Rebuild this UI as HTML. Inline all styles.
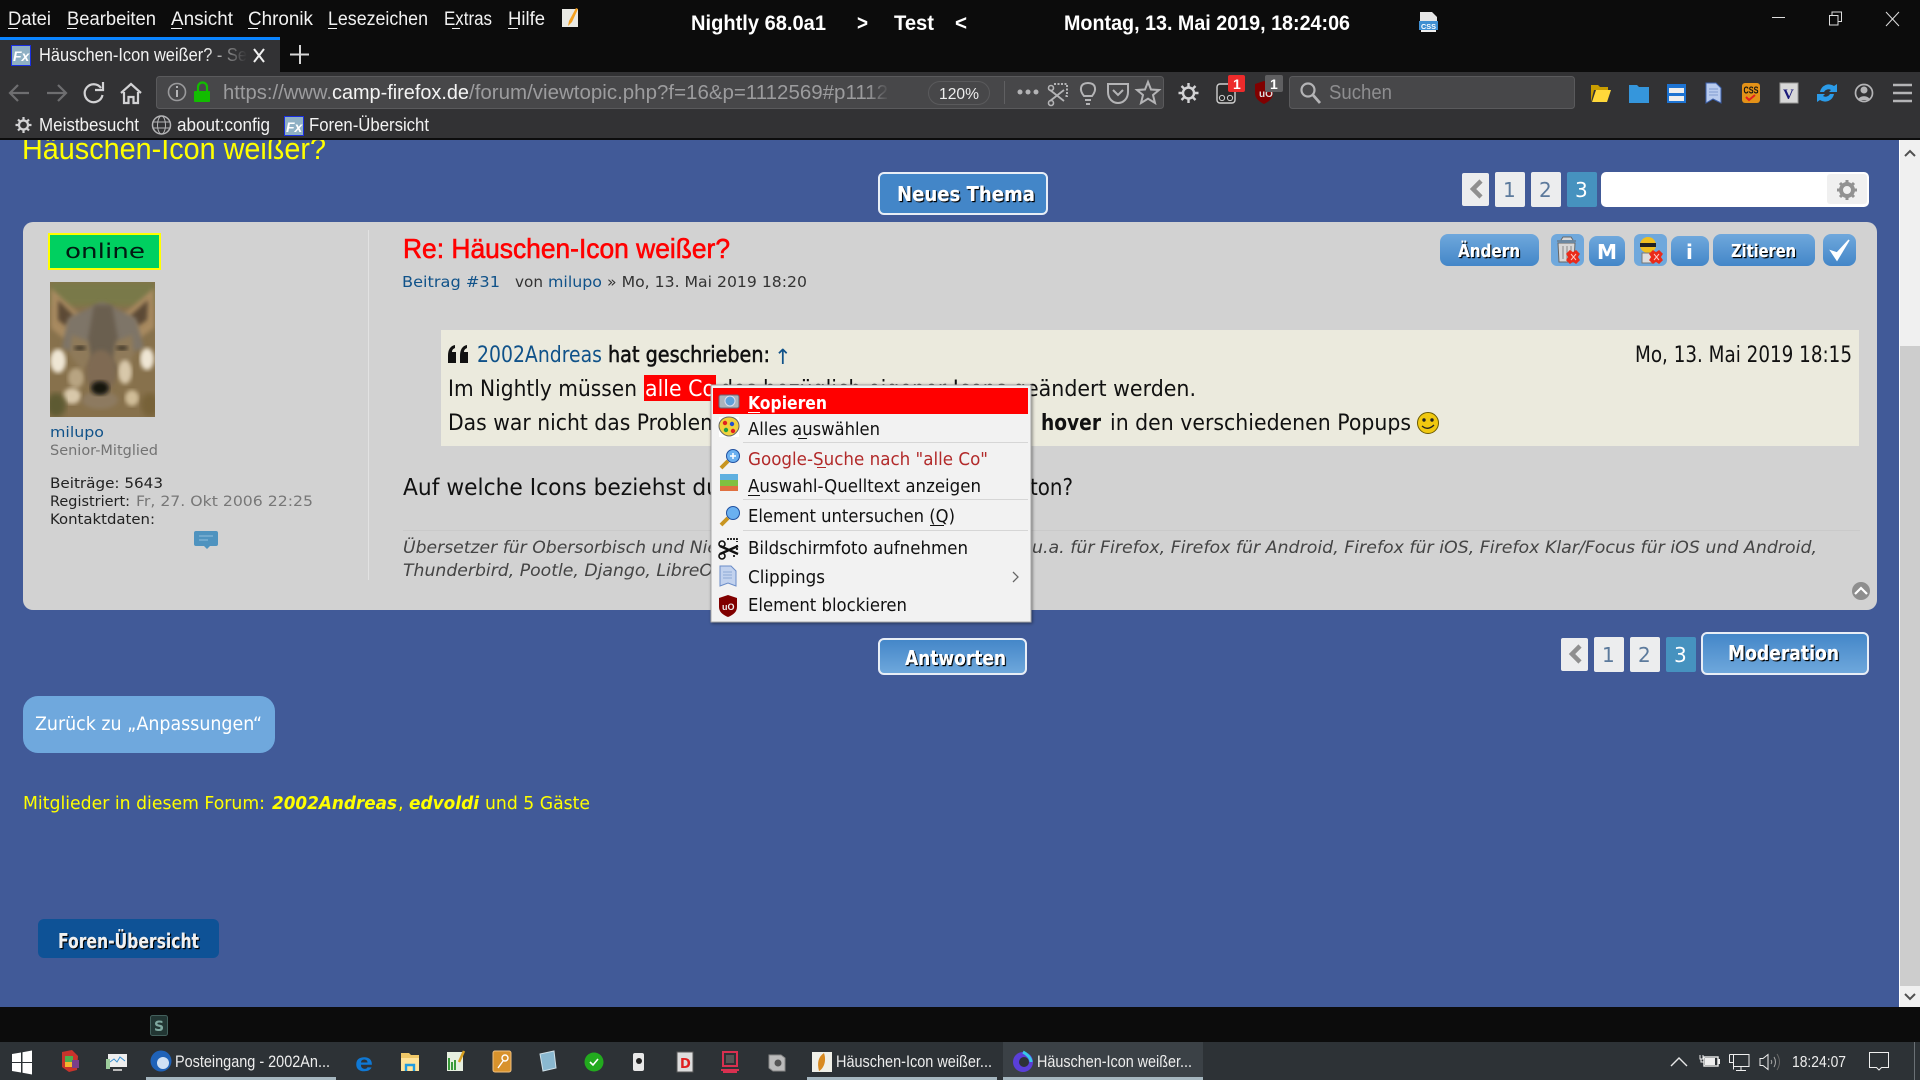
<!DOCTYPE html>
<html lang="de"><head><meta charset="utf-8"><title>Häuschen-Icon weißer?</title>
<style>
html,body{margin:0;padding:0;width:1920px;height:1080px;overflow:hidden;background:#415a98}
svg{display:block;position:absolute;left:0;top:0}
text{white-space:pre}
.u{font-family:"Liberation Sans",sans-serif}
.d{font-family:"DejaVu Sans",sans-serif}
.db{font-family:"DejaVu Sans",sans-serif;font-weight:bold}
.bt{font-family:"DejaVu Sans",sans-serif;font-weight:bold;fill:#fff;filter:url(#ts)}
.ic{fill:none;stroke:#b4b4b6;stroke-width:2}
</style></head><body>
<svg width="1920" height="1080" viewBox="0 0 1920 1080" xmlns="http://www.w3.org/2000/svg">
<defs>
<linearGradient id="g1" x1="0" y1="0" x2="0" y2="1"><stop offset="0" stop-color="#6fa8dc"/><stop offset="1" stop-color="#4386c8"/></linearGradient>
<linearGradient id="g2" x1="0" y1="0" x2="0" y2="1"><stop offset="0" stop-color="#4386c8"/><stop offset="1" stop-color="#6fa8dc"/></linearGradient>
<linearGradient id="fade" x1="0" y1="0" x2="1" y2="0"><stop offset="0" stop-color="#323234" stop-opacity="0"/><stop offset="1" stop-color="#323234"/></linearGradient>
<linearGradient id="fade2" x1="0" y1="0" x2="1" y2="0"><stop offset="0" stop-color="#474749" stop-opacity="0"/><stop offset="1" stop-color="#474749"/></linearGradient>
<filter id="ts" x="-5%" y="-20%" width="110%" height="150%"><feDropShadow dx="1.200" dy="1.200" stdDeviation="0.2" flood-color="#000" flood-opacity="1"/></filter>
<filter id="blur2"><feGaussianBlur stdDeviation="2.200"/></filter>
<filter id="blur3"><feGaussianBlur stdDeviation="3"/></filter>
<filter id="sh" x="-5%" y="-5%" width="110%" height="110%"><feDropShadow dx="1" dy="1" stdDeviation="1.500" flood-color="#000" flood-opacity=".45"/></filter>
<clipPath id="av"><rect x="50" y="282" width="105" height="135"/></clipPath>
</defs>

<!-- page -->
<rect width="1920" height="1080" fill="#415a98"/>
<text class="u" x="22" y="159" font-size="31" fill="#ffff00" textLength="304" lengthAdjust="spacingAndGlyphs">Häuschen-Icon weißer?</text>

<!-- title bar -->
<rect x="0" y="0" width="1920" height="72" fill="#0c0c0c"/>
<g class="u" font-size="19" fill="#f2f2f2">
<text x="8" y="25" textLength="43" lengthAdjust="spacingAndGlyphs">Datei</text>
<text x="67" y="25" textLength="89" lengthAdjust="spacingAndGlyphs">Bearbeiten</text>
<text x="171" y="25" textLength="62" lengthAdjust="spacingAndGlyphs">Ansicht</text>
<text x="248" y="25" textLength="65" lengthAdjust="spacingAndGlyphs">Chronik</text>
<text x="328" y="25" textLength="100" lengthAdjust="spacingAndGlyphs">Lesezeichen</text>
<text x="444" y="25" textLength="48" lengthAdjust="spacingAndGlyphs">Extras</text>
<text x="508" y="25" textLength="37" lengthAdjust="spacingAndGlyphs">Hilfe</text>
</g>
<g fill="#f2f2f2"><rect x="8" y="28" width="10" height="1"/><rect x="67" y="28" width="10" height="1"/><rect x="171" y="28" width="11" height="1"/><rect x="248" y="28" width="10" height="1"/><rect x="328" y="28" width="9" height="1"/><rect x="452" y="28" width="8" height="1"/><rect x="508" y="28" width="10" height="1"/></g>
<rect x="562" y="9" width="16" height="18" fill="#e9e9e4"/><path d="M568 26l1-5 7-13 2 1-6 13z" fill="#f4a020"/>
<g class="u" font-size="21" font-weight="bold" fill="#fff">
<text x="691" y="30" textLength="135" lengthAdjust="spacingAndGlyphs">Nightly 68.0a1</text>
<text x="857" y="30" textLength="11" lengthAdjust="spacingAndGlyphs">&gt;</text>
<text x="894" y="30" textLength="40" lengthAdjust="spacingAndGlyphs">Test</text>
<text x="955" y="30" textLength="12" lengthAdjust="spacingAndGlyphs">&lt;</text>
<text x="1064" y="30" textLength="286" lengthAdjust="spacingAndGlyphs">Montag, 13. Mai 2019, 18:24:06</text>
</g>
<path d="M1420 12h12l5 5v8h-17z" fill="#e6e6e6"/><rect x="1419" y="21" width="19" height="9" fill="#3f8fd2"/><rect x="1421" y="30" width="15" height="2" fill="#eee"/>
<text class="u" x="1421" y="29" font-size="7" font-weight="bold" fill="#fff" textLength="15" lengthAdjust="spacingAndGlyphs">CSS</text>
<!-- window controls -->
<rect x="1772" y="17" width="13" height="1" fill="#ddd"/>
<path d="M1829.500 15.500h8.500v9.500h-8.500zM1832 15v-3h9.500v9.500h-3.500" fill="none" stroke="#ddd"/>
<path d="M1886 12l13 14M1899 12l-13 14" stroke="#ddd" fill="none"/>

<!-- tab strip -->
<rect x="0" y="37" width="280" height="35" fill="#323234"/>
<rect x="0" y="37" width="280" height="3" fill="#0a84ff"/>
<rect x="11.500" y="45.500" width="19" height="20" fill="#8fb0c4" stroke="#1a2fe0"/>
<text class="u" x="13" y="61" font-size="14" font-style="italic" font-weight="bold" fill="#fff">Fx</text>
<text class="u" x="39" y="61" font-size="18" fill="#f2f2f2" textLength="208" lengthAdjust="spacingAndGlyphs">Häuschen-Icon weißer? - Se</text>
<rect x="205" y="44" width="42" height="24" fill="url(#fade)"/>
<path d="M254 49l10 13M264 49l-10 13" stroke="#f0f0f0" stroke-width="2" fill="none"/>
<path d="M300 45v19M290 54.500h19" stroke="#d6d6d6" stroke-width="2" fill="none"/>

<!-- nav bar -->
<rect x="0" y="72" width="1920" height="66" fill="#323234"/>
<rect x="0" y="138" width="1920" height="2" fill="#0c0c0c"/>
<path d="M29 93H11M18 85l-8 8 8 8" fill="none" stroke="#6e6e70" stroke-width="2.200"/>
<path d="M47 93h18M58 85l8 8-8 8" fill="none" stroke="#6e6e70" stroke-width="2.200"/>
<path d="M101 88a9 9 0 1 0 1.500 7M103 82v8h-8" fill="none" stroke="#d2d2d4" stroke-width="2.200"/>
<path d="M121 93l10-9 10 9M124 92v11h4.500v-6h5v6h4.500V92" fill="none" stroke="#d2d2d4" stroke-width="2.200"/>
<rect x="156.500" y="76.500" width="1007" height="32" rx="3" fill="#474749" stroke="#5a5a5c"/>
<circle cx="177" cy="92" r="8.500" fill="none" stroke="#9a9a9c" stroke-width="1.600"/><rect x="176" y="90" width="2" height="7" fill="#b4b4b6"/><rect x="176" y="86" width="2" height="2" fill="#b4b4b6"/>
<path d="M198 91v-4a4.500 4.500 0 0 1 9 0v4" fill="none" stroke="#12bc00" stroke-width="2.200"/><rect x="194" y="91" width="16" height="11" rx="1" fill="#12bc00"/>
<g class="u" font-size="20">
<text x="223" y="99" fill="#9c9c9e" textLength="109" lengthAdjust="spacingAndGlyphs">https://www.</text>
<text x="332" y="99" fill="#f4f4f4" textLength="137" lengthAdjust="spacingAndGlyphs">camp-firefox.de</text>
<text x="469" y="99" fill="#9c9c9e" textLength="419" lengthAdjust="spacingAndGlyphs">/forum/viewtopic.php?f=16&amp;p=1112569#p1112</text>
</g>
<rect x="868" y="78" width="22" height="28" fill="url(#fade2)"/>
<rect x="928.500" y="81.500" width="61" height="23" rx="11.500" fill="#474749" stroke="#5a5a5c"/>
<text class="u" x="939" y="99" font-size="16" fill="#ededed" textLength="40" lengthAdjust="spacingAndGlyphs">120%</text>
<rect x="1004" y="81" width="1" height="23" fill="#606062"/>
<g fill="#b4b4b6"><circle cx="1020" cy="92" r="2.500"/><circle cx="1028" cy="92" r="2.500"/><circle cx="1036" cy="92" r="2.500"/></g>
<g class="ic">
<path d="M1054 84h13v12h-3" stroke-width="2" stroke-dasharray="2 1.500"/><path d="M1050 90l14 11M1064 90l-14 11" stroke-width="1.800"/><circle cx="1051" cy="103" r="2.500" stroke-width="1.600"/><circle cx="1051" cy="88" r="2.500" stroke-width="1.600"/>
<path d="M1084 96c-5-6-4-13 4-13s9 7 4 13zM1085 100h6M1086 104h4" stroke-width="2"/>
<path d="M1108 84h20v8c0 7-5 11-10 11s-10-4-10-11zM1113 90l5 5 5-5" stroke-width="2"/>
<path d="M1148 82l3 7.500 8 .5-6 5 2 8-7-4.300-7 4.300 2-8-6-5 8-.5z" stroke-width="2"/>
</g>
<g stroke="#d2d2d4" fill="none"><circle cx="1188.500" cy="93" r="5.500" stroke-width="2.400"/><path d="M1188.500 83v4M1188.500 99v4M1178.500 93h4M1194.500 93h4M1181.500 86l3 3M1192.500 97l3 3M1195.500 86l-3 3M1184.500 97l-3 3" stroke-width="2.400"/></g>
<rect x="1217" y="84" width="18" height="19" rx="3" fill="#2a2a2a" stroke="#cfcfcf" stroke-width="1.400"/><circle cx="1222" cy="98" r="2.600" fill="none" stroke="#cfcfcf"/><circle cx="1230" cy="98" r="2.600" fill="none" stroke="#cfcfcf"/>
<rect x="1228" y="75" width="17" height="17" rx="2" fill="#ed2b2b"/><text class="u" x="1233" y="89" font-size="14" font-weight="bold" fill="#fff">1</text>
<path d="M1255 84l9-3 9 3v9c0 6-5 9-9 11-4-2-9-5-9-11z" fill="#800000"/>
<text class="u" x="1259" y="97" font-size="10" font-weight="bold" fill="#ddd">uO</text>
<rect x="1265" y="75" width="18" height="17" rx="2" fill="#5f5f61"/><text class="u" x="1270" y="89" font-size="14" font-weight="bold" fill="#fff">1</text>
<rect x="1289.500" y="76.500" width="285" height="32" rx="3" fill="#474749" stroke="#5a5a5c"/>
<circle cx="1308" cy="90" r="6.500" fill="none" stroke="#b4b4b6" stroke-width="2.200"/><path d="M1313 95l7 8" stroke="#b4b4b6" stroke-width="2.800"/>
<text class="u" x="1329" y="99" font-size="20" fill="#8e8e90" textLength="63" lengthAdjust="spacingAndGlyphs">Suchen</text>
<!-- right toolbar icons -->
<path d="M1591 85h7l2 2h8v3h-14l-3 12z" fill="#c99d00"/><path d="M1596 90h15l-4 12h-15z" fill="#ffd83a"/>
<path d="M1629 85h8l2 2h10v16h-20z" fill="#3596dc"/>
<rect x="1667" y="84" width="19" height="19" fill="#1d73d2"/><rect x="1669" y="88" width="15" height="5" fill="#eee"/><rect x="1669" y="96" width="15" height="5" fill="#eee"/>
<path d="M1706 83h10l5 5v15l-8-4-7 4z" fill="#b8cbee" stroke="#3d62ae"/><path d="M1709 89h9M1709 92h9M1709 95h9" stroke="#7f9bd0"/>
<rect x="1742" y="83" width="18" height="20" rx="3" fill="#e49218"/><text class="u" x="1743.500" y="93.500" font-size="10" font-weight="bold" fill="#111" textLength="15" lengthAdjust="spacingAndGlyphs">CSS</text><path d="M1746 97l3 3 6-5" stroke="#e02020" stroke-width="2" fill="none"/>
<rect x="1780" y="83" width="18" height="20" fill="#d8d8d8" stroke="#999"/><text x="1783" y="99" font-size="15" font-weight="bold" fill="#1a1a7a" style="font-family:'Liberation Serif',serif">V</text>
<path d="M1820 92a9 9 0 0 1 14-6l3-2v8h-8l2-2a5 5 0 0 0-7 2zM1834 94a9 9 0 0 1-14 6l-3 2v-8h8l-2 2a5 5 0 0 0 7-2z" fill="#2b9be8"/>
<circle cx="1864" cy="93" r="8.500" fill="none" stroke="#b4b4b6" stroke-width="1.700"/><circle cx="1864" cy="90" r="3.500" fill="#b4b4b6"/><path d="M1858 100c1-5 11-5 12 0z" fill="#b4b4b6"/>
<path d="M1893 85h19M1893 93h19M1893 101h19" stroke="#b4b4b6" stroke-width="2.600"/>

<!-- bookmarks -->
<g stroke="#d2d2d4" fill="none"><circle cx="23.500" cy="125" r="4.500" stroke-width="2.200"/><path d="M23.500 117v3M23.500 130v3M15.500 125h3M28.500 125h3M18 119.500l2 2M27 128.500l2 2M29 119.500l-2 2M20 128.500l-2 2" stroke-width="2.200"/></g>
<g class="u" font-size="18" fill="#f2f2f2">
<text x="39" y="131" textLength="100" lengthAdjust="spacingAndGlyphs">Meistbesucht</text>
<text x="177" y="131" textLength="93" lengthAdjust="spacingAndGlyphs">about:config</text>
<text x="309" y="131" textLength="120" lengthAdjust="spacingAndGlyphs">Foren-Übersicht</text>
</g>
<circle cx="161.500" cy="125" r="9" fill="none" stroke="#b4b4b6" stroke-width="1.500"/><ellipse cx="161.500" cy="125" rx="4" ry="9" fill="none" stroke="#b4b4b6"/><path d="M153 122h17M153 128h17" stroke="#b4b4b6"/>
<rect x="284.500" y="116.500" width="19" height="19" fill="#8fb0c4" stroke="#1a2fe0"/>
<text class="u" x="286" y="132" font-size="14" font-style="italic" font-weight="bold" fill="#fff">Fx</text>

<!-- scrollbar -->
<rect x="1899" y="140" width="21" height="867" fill="#f0f0f0"/>
<rect x="1899" y="140" width="1" height="867" fill="#fff"/>
<rect x="1900" y="346" width="20" height="640" fill="#cdcdcd"/>
<path d="M1905 156l5-5 5 5" fill="none" stroke="#505050" stroke-width="2"/>
<path d="M1905 994l5 5 5-5" fill="none" stroke="#505050" stroke-width="2"/>

<!-- top action row -->
<rect x="879" y="173" width="168" height="41" rx="5" fill="#4386c8" stroke="#e8eef6" stroke-width="2"/>
<text class="bt" x="897" y="201" font-size="20" textLength="138" lengthAdjust="spacingAndGlyphs">Neues Thema</text>
<g>
<rect x="1462" y="173" width="27" height="33" rx="2" fill="#ecedee"/><path d="M1481 181l-8 8 8 8" fill="none" stroke="#8f8f8f" stroke-width="4.500"/>
<rect x="1495" y="172" width="30" height="35" rx="2" fill="#ecedee"/><text class="d" x="1503" y="197" font-size="20" fill="#5c7a9c">1</text>
<rect x="1531" y="172" width="30" height="35" rx="2" fill="#ecedee"/><text class="d" x="1539" y="197" font-size="20" fill="#5c7a9c">2</text>
<rect x="1567" y="172" width="30" height="35" rx="2" fill="#4692bf"/><text class="d" x="1575" y="197" font-size="20" fill="#fff">3</text>
</g>
<rect x="1601" y="172" width="268" height="35" rx="5" fill="#fff"/>
<rect x="1827" y="174" width="40" height="30" rx="3" fill="#f0f0f0"/>
<circle cx="1847" cy="190" r="6" fill="none" stroke="#929292" stroke-width="4"/><g stroke="#929292" stroke-width="3"><path d="M1847 180v3M1847 197v3M1837 190h3M1854 190h3M1840 183l2 2M1852 195l2 2M1854 183l-2 2M1842 195l-2 2"/></g>

<!-- post box -->
<rect x="23" y="222" width="1854" height="388" rx="10" fill="#d2d2d2"/>
<rect x="368" y="230" width="1" height="350" fill="#e2e2e2"/>
<rect x="49" y="234" width="111" height="35" fill="#00d060" stroke="#ffff00" stroke-width="2"/>
<text class="d" x="65" y="258" font-size="20" fill="#021a12" textLength="80" lengthAdjust="spacingAndGlyphs">online</text>
<!-- avatar -->
<g clip-path="url(#av)">
<rect x="50" y="282" width="105" height="135" fill="#87714c"/>
<rect x="50" y="282" width="105" height="24" fill="#79794a" filter="url(#blur3)"/>
<path d="M51 288l30 28-4 18-14 4-12-10zM154 288l-32 28 4 18 14 4 14-10z" fill="#a88a60" filter="url(#blur2)"/>
<path d="M58 300l16 16-8 10-8-6zM148 300l-18 16 8 10 9-6z" fill="#5b4a34" filter="url(#blur2)"/>
<path d="M68 318l34-16 34 16 8 30-24 8h-36l-22-8z" fill="#7e7567" filter="url(#blur2)"/>
<path d="M94 305h18l8 45-8 30h-18l-8-30z" fill="#6a5f50" filter="url(#blur2)"/>
<path d="M72 335l16 6 4 20-10 10-12-16zM132 335l-16 6-4 20 10 10 12-16z" fill="#8f7a5a" filter="url(#blur2)"/>
<ellipse cx="58" cy="361" rx="8" ry="12" fill="#efe6d4" filter="url(#blur2)"/>
<ellipse cx="147" cy="359" rx="7" ry="11" fill="#efe6d4" filter="url(#blur2)"/>
<ellipse cx="76" cy="378" rx="8" ry="10" fill="#b8a482" filter="url(#blur2)"/>
<ellipse cx="125" cy="372" rx="7" ry="12" fill="#d8c8aa" filter="url(#blur2)"/>
<ellipse cx="72" cy="396" rx="9" ry="8" fill="#d8c8aa" filter="url(#blur2)"/>
<ellipse cx="132" cy="398" rx="7" ry="8" fill="#d0bd98" filter="url(#blur2)"/>
<ellipse cx="101" cy="372" rx="15" ry="22" fill="#7f6a52" filter="url(#blur2)"/>
<ellipse cx="100" cy="400" rx="18" ry="9" fill="#8d7a60" filter="url(#blur2)"/>
<ellipse cx="56" cy="405" rx="10" ry="12" fill="#5d5a30" filter="url(#blur3)"/>
<ellipse cx="150" cy="405" rx="9" ry="12" fill="#776238" filter="url(#blur3)"/>
<ellipse cx="80" cy="348" rx="6" ry="2.500" fill="#3e3628" filter="url(#blur2)"/><ellipse cx="122" cy="348" rx="6" ry="2.500" fill="#3e3628" filter="url(#blur2)"/>
<ellipse cx="100" cy="388" rx="9" ry="7" fill="#14120e" filter="url(#blur2)"/>
</g>
<text class="d" x="50" y="437" font-size="14.500" fill="#105289" textLength="54" lengthAdjust="spacingAndGlyphs">milupo</text>
<text class="d" x="50" y="455" font-size="14.500" fill="#737373" textLength="108" lengthAdjust="spacingAndGlyphs">Senior-Mitglied</text>
<text class="d" x="50" y="488" font-size="14.500" fill="#222" textLength="113" lengthAdjust="spacingAndGlyphs">Beiträge: 5643</text>
<text class="d" x="50" y="506" font-size="14.500" fill="#222" textLength="80" lengthAdjust="spacingAndGlyphs">Registriert:</text>
<text class="d" x="136" y="506" font-size="14.500" fill="#777" textLength="177" lengthAdjust="spacingAndGlyphs">Fr, 27. Okt 2006 22:25</text>
<text class="d" x="50" y="524" font-size="14.500" fill="#222" textLength="105" lengthAdjust="spacingAndGlyphs">Kontaktdaten:</text>
<path d="M196 531h20a2 2 0 0 1 2 2v11a2 2 0 0 1-2 2h-6l-3 3-3-3h-8a2 2 0 0 1-2-2v-11a2 2 0 0 1 2-2z" fill="#4f93bf"/>
<path d="M199 536h14M199 540h9" stroke="#85b6d6" stroke-width="1.200"/>

<!-- post body -->
<text class="u" x="403" y="258" font-size="28" fill="#ff0000" textLength="327" lengthAdjust="spacingAndGlyphs" style="stroke:#ff0000;stroke-width:.6">Re: Häuschen-Icon weißer?</text>
<text class="d" x="402" y="287" font-size="15.500" fill="#105289" textLength="98" lengthAdjust="spacingAndGlyphs">Beitrag #31</text>
<text class="d" x="515" y="287" font-size="15.500" fill="#333" textLength="28" lengthAdjust="spacingAndGlyphs">von</text>
<text class="d" x="548" y="287" font-size="15.500" fill="#105289" textLength="54" lengthAdjust="spacingAndGlyphs">milupo</text>
<text class="d" x="607" y="287" font-size="15.500" fill="#333" textLength="200" lengthAdjust="spacingAndGlyphs">» Mo, 13. Mai 2019 18:20</text>

<!-- buttons in post -->
<rect x="1440" y="234" width="99" height="32" rx="8" fill="url(#g1)"/>
<text class="bt" x="1458" y="257" font-size="18" textLength="62" lengthAdjust="spacingAndGlyphs">Ändern</text>
<rect x="1551" y="234" width="33" height="32" rx="6" fill="#6fa8dc"/>
<path d="M1557 241h19M1561 240l2-3h8l2 3M1558 243h17l-1 19h-15z" fill="#d8d8d8" stroke="#666"/><path d="M1563 246v13M1567 246v13M1571 246v13" stroke="#888"/>
<path d="M1570 251l3 2 3-2 3 3-2 3 2 3-3 3-3-2-3 2-3-3 2-3-2-3z" fill="#ea2a1a" stroke="#ea2a1a" stroke-width="1.500"/><path d="M1571 254l5 6M1576 254l-5 6" stroke="#ffc8c0" stroke-width="1"/>
<rect x="1589" y="236" width="36" height="30" rx="8" fill="url(#g1)"/>
<text class="db" x="1597" y="259" font-size="20" fill="#fff" textLength="20" lengthAdjust="spacingAndGlyphs">M</text>
<rect x="1634" y="234" width="33" height="32" rx="6" fill="#6fa8dc"/>
<circle cx="1648" cy="245" r="8" fill="#f0c020"/><rect x="1640" y="243" width="16" height="4" fill="#222"/><rect x="1642" y="253" width="12" height="10" fill="#ddd" stroke="#777"/>
<path d="M1653 251l3 2 3-2 3 3-2 3 2 3-3 3-3-2-3 2-3-3 2-3-2-3z" fill="#ea2a1a" stroke="#ea2a1a" stroke-width="1.500"/><path d="M1654 254l5 6M1659 254l-5 6" stroke="#ffc8c0" stroke-width="1"/>
<rect x="1671" y="236" width="38" height="30" rx="8" fill="url(#g1)"/>
<text class="db" x="1686" y="259" font-size="20" fill="#fff">i</text>
<rect x="1713" y="234" width="102" height="32" rx="8" fill="url(#g1)"/>
<text class="bt" x="1731" y="257" font-size="18" textLength="65" lengthAdjust="spacingAndGlyphs">Zitieren</text>
<rect x="1823" y="234" width="33" height="32" rx="8" fill="url(#g1)"/>
<path d="M1831 251l6 9 12-20-12 13z" fill="#fff" stroke="#fff" stroke-width="1.500"/>

<!-- quote -->
<rect x="441" y="330" width="1418" height="116" fill="#ebeadd"/>
<path d="M448 356c0-6 2-10 7-11v3c-2 1-3 2-3 4h4v11h-8zM460 356c0-6 2-10 7-11v3c-2 1-3 2-3 4h4v11h-8z" fill="#111"/>
<g class="d" font-size="22">
<text x="477" y="362" fill="#105289" textLength="125" lengthAdjust="spacingAndGlyphs">2002Andreas</text>
<text x="608" y="362" fill="#111" textLength="162" lengthAdjust="spacingAndGlyphs" style="stroke:#111;stroke-width:.55">hat geschrieben:</text>
<text x="774" y="364" fill="#105289" font-size="21">↑</text>
<text x="1635" y="362" fill="#111" textLength="217" lengthAdjust="spacingAndGlyphs">Mo, 13. Mai 2019 18:15</text>
<text x="448" y="396" fill="#111" textLength="189" lengthAdjust="spacingAndGlyphs">Im Nightly müssen</text>
</g>
<rect x="644" y="375" width="72" height="26" fill="#ff0000"/>
<g class="d" font-size="22">
<text x="645" y="396" fill="#fff" textLength="70" lengthAdjust="spacingAndGlyphs">alle Co</text>
<text x="720" y="396" fill="#111" textLength="476" lengthAdjust="spacingAndGlyphs">des bezüglich eigener Icons geändert werden.</text>
<text x="448" y="430" fill="#111" textLength="272" lengthAdjust="spacingAndGlyphs">Das war nicht das Problem</text>
<text x="1041" y="430" fill="#111" font-weight="bold" textLength="60" lengthAdjust="spacingAndGlyphs">hover</text>
<text x="1110" y="430" fill="#111" textLength="301" lengthAdjust="spacingAndGlyphs">in den verschiedenen Popups</text>
</g>
<circle cx="1428" cy="423" r="10.500" fill="#f0c810" stroke="#6a5a00"/><circle cx="1424" cy="420" r="1.700" fill="#222"/><circle cx="1432" cy="420" r="1.700" fill="#222"/><path d="M1422 426q6 5 12-1" fill="none" stroke="#222" stroke-width="1.300"/>
<text class="d" x="403" y="495" font-size="23" fill="#111" textLength="317" lengthAdjust="spacingAndGlyphs">Auf welche Icons beziehst du</text>
<text class="d" x="1030" y="495" font-size="23" fill="#111" textLength="43" lengthAdjust="spacingAndGlyphs">ton?</text>
<rect x="403" y="530" width="1457" height="1" fill="#cacaca"/>
<g class="d" font-size="16.500" font-style="italic" fill="#444">
<text x="403" y="553" textLength="315" lengthAdjust="spacingAndGlyphs">Übersetzer für Obersorbisch und Nie</text>
<text x="1032" y="553" textLength="785" lengthAdjust="spacingAndGlyphs">u.a. für Firefox, Firefox für Android, Firefox für iOS, Firefox Klar/Focus für iOS und Android,</text>
<text x="403" y="576" textLength="310" lengthAdjust="spacingAndGlyphs">Thunderbird, Pootle, Django, LibreO</text>
</g>
<circle cx="1861" cy="591" r="9" fill="#8e8e8e"/><path d="M1855 594l6-6 6 6" fill="none" stroke="#fff" stroke-width="2.200"/>

<!-- context menu -->
<g>
<rect x="711" y="385" width="320" height="237" fill="#f2f2f2" stroke="#a8a8a8" filter="url(#sh)"/>
<rect x="713" y="388" width="315" height="26" fill="#ff0000"/>
<rect x="743" y="442" width="285" height="1" fill="#d6d6d6"/>
<rect x="743" y="499" width="285" height="1" fill="#d6d6d6"/>
<rect x="743" y="530" width="285" height="1" fill="#d6d6d6"/>
<g class="d" font-size="17.500" fill="#111">
<text x="748" y="409" fill="#fff" font-weight="bold" textLength="79" lengthAdjust="spacingAndGlyphs">Kopieren</text>
<text x="748" y="435" textLength="132" lengthAdjust="spacingAndGlyphs">Alles auswählen</text>
<text x="748" y="465" fill="#b22a2a" textLength="240" lengthAdjust="spacingAndGlyphs">Google-Suche nach "alle Co"</text>
<text x="748" y="492" textLength="233" lengthAdjust="spacingAndGlyphs">Auswahl-Quelltext anzeigen</text>
<text x="748" y="522" textLength="207" lengthAdjust="spacingAndGlyphs">Element untersuchen (Q)</text>
<text x="748" y="554" textLength="220" lengthAdjust="spacingAndGlyphs">Bildschirmfoto aufnehmen</text>
<text x="748" y="583" textLength="77" lengthAdjust="spacingAndGlyphs">Clippings</text>
<text x="748" y="611" textLength="159" lengthAdjust="spacingAndGlyphs">Element blockieren</text>
</g>
<g><rect x="748" y="412" width="12" height="1" fill="#fff"/><rect x="798" y="438" width="9" height="1" fill="#111"/><rect x="817" y="467" width="9" height="1" fill="#b22a2a"/><rect x="748" y="495" width="12" height="1" fill="#111"/><rect x="930" y="525" width="14" height="1" fill="#111"/></g>
<path d="M1013 572l5 5-5 5" fill="none" stroke="#666" stroke-width="1.300"/>
<!-- icons -->
<rect x="719" y="395" width="20" height="13" rx="2" fill="#aab4bc" stroke="#667"/><circle cx="730" cy="401" r="5" fill="#5fa0d8" stroke="#dde"/>
<rect x="719" y="417" width="20" height="20" fill="#fff"/><path d="M729 417c7 0 10 5 10 9 0 5-5 10-10 10s-10-5-10-10 4-9 10-9z" fill="#f0d23c" stroke="#666"/><circle cx="725" cy="423" r="2.200" fill="#e02020"/><circle cx="732" cy="424" r="2.200" fill="#2050d0"/><circle cx="726" cy="430" r="2.200" fill="#20a040"/><circle cx="733" cy="431" r="2.200" fill="#e02020"/>
<circle cx="733" cy="456" r="6.500" fill="#6ab0f0" stroke="#2050a0"/><path d="M730 456h6M733 453v6" stroke="#fff" stroke-width="1.500"/><path d="M728 461l-7 7" stroke="#c89520" stroke-width="4"/>
<rect x="720" y="474" width="18" height="6" fill="#5fb0e0"/><rect x="720" y="480" width="18" height="6" fill="#80c040"/><rect x="720" y="486" width="18" height="5" fill="#e07040"/>
<circle cx="733" cy="513" r="6.500" fill="#6ab0f0" stroke="#2050a0"/><path d="M728 518l-7 7" stroke="#c89520" stroke-width="4"/>
<path d="M720 546l18 8M720 554l18-8" stroke="#111" stroke-width="2.400"/><circle cx="722" cy="544" r="3" fill="none" stroke="#111" stroke-width="1.600"/><circle cx="722" cy="556" r="3" fill="none" stroke="#111" stroke-width="1.600"/><path d="M727 539h10v3M737 545v6M733 556h3" stroke="#111" stroke-width="1.800" stroke-dasharray="2 1" fill="none"/>
<path d="M720 566h11l5 5v15l-8-3-8 3z" fill="#c2d2ee" stroke="#6a8cc8"/><path d="M723 572h9M723 575h9M723 578h9" stroke="#8fa9d6"/>
<path d="M719 598l9-3 9 3v9c0 5-4 8-9 10-5-2-9-5-9-10z" fill="#800000"/><text class="u" x="722" y="610" font-size="9" font-weight="bold" fill="#eee">uO</text>
</g>

<!-- lower row -->
<rect x="879" y="639" width="147" height="35" rx="5" fill="url(#g2)" stroke="#e8eef6" stroke-width="2"/>
<text class="bt" x="905" y="665" font-size="20" textLength="101" lengthAdjust="spacingAndGlyphs">Antworten</text>
<rect x="1561" y="638" width="27" height="33" rx="2" fill="#ecedee"/><path d="M1580 646l-8 8 8 8" fill="none" stroke="#8f8f8f" stroke-width="4.500"/>
<rect x="1594" y="637" width="30" height="35" rx="2" fill="#ecedee"/><text class="d" x="1602" y="662" font-size="20" fill="#5c7a9c">1</text>
<rect x="1630" y="637" width="30" height="35" rx="2" fill="#ecedee"/><text class="d" x="1638" y="662" font-size="20" fill="#5c7a9c">2</text>
<rect x="1666" y="637" width="30" height="35" rx="2" fill="#4692bf"/><text class="d" x="1674" y="662" font-size="20" fill="#fff">3</text>
<rect x="1702" y="633" width="166" height="41" rx="5" fill="url(#g2)" stroke="#e8eef6" stroke-width="2"/>
<text class="bt" x="1728" y="660" font-size="20" textLength="111" lengthAdjust="spacingAndGlyphs">Moderation</text>

<rect x="23" y="696" width="252" height="57" rx="15" fill="#6fa8dd"/>
<text class="d" x="35" y="730" font-size="19" fill="#fff" textLength="227" lengthAdjust="spacingAndGlyphs">Zurück zu „Anpassungen“</text>

<g class="d" font-size="17.500" fill="#ffff00">
<text x="23" y="809" textLength="242" lengthAdjust="spacingAndGlyphs">Mitglieder in diesem Forum:</text>
<text x="272" y="809" font-weight="bold" font-style="italic" textLength="125" lengthAdjust="spacingAndGlyphs">2002Andreas</text>
<text x="398" y="809">,</text>
<text x="409" y="809" font-weight="bold" font-style="italic" textLength="70" lengthAdjust="spacingAndGlyphs">edvoldi</text>
<text x="485" y="809" textLength="105" lengthAdjust="spacingAndGlyphs">und 5 Gäste</text>
</g>
<rect x="38" y="919" width="181" height="39" rx="6" fill="#0e5296"/>
<text class="bt" x="58" y="948" font-size="20" textLength="141" lengthAdjust="spacingAndGlyphs" style="fill:#f0f0f0">Foren-Übersicht</text>

<!-- bottom black bar -->
<rect x="0" y="1007" width="1920" height="35" fill="#0c0c0c"/>
<rect x="150.500" y="1015.500" width="17" height="20" rx="2" fill="#223633" stroke="#43605c"/>
<text class="db" x="154" y="1031" font-size="14" fill="#7fa89f">S</text>

<!-- taskbar -->
<rect x="0" y="1042" width="1920" height="38" fill="#2d3236"/>
<rect x="1003" y="1042" width="200" height="38" fill="#3b4146"/>
<rect x="146" y="1077" width="190" height="3" fill="#a5b6bf"/>
<rect x="807" y="1077" width="190" height="3" fill="#a5b6bf"/>
<rect x="1003" y="1077" width="200" height="3" fill="#a5b6bf"/>
<g fill="#fff"><path d="M12 1054l9-1.500v9.500h-9zM22.500 1052.200l9.500-1.700v11.500h-9.500zM12 1063h9v9.500l-9-1.500zM22.500 1063h9.500v11.500l-9.500-1.700z"/></g>
<path d="M62 1052l10-2 6 6-1 14-8 2-7-5z" fill="#c8342c"/><rect x="65" y="1056" width="8" height="6" fill="#4caf50"/><rect x="65" y="1062" width="8" height="5" fill="#f5b530"/><rect x="72" y="1060" width="7" height="8" fill="#7a3f8a"/>
<rect x="108" y="1054" width="19" height="13" fill="#eee"/><path d="M110 1062l4-3 3 3 3-5 5 4" fill="none" stroke="#3a90d0"/><path d="M113 1070h9" stroke="#bbb" stroke-width="2"/><rect x="106" y="1059" width="4" height="10" fill="#9ccc9c"/>
<circle cx="161" cy="1061" r="10.500" fill="#1f62b8"/><circle cx="163" cy="1063" r="6" fill="#cfe0f4"/>
<text class="u" x="175" y="1067" font-size="17" fill="#ededed" textLength="155" lengthAdjust="spacingAndGlyphs">Posteingang - 2002An...</text>
<text class="u" x="355" y="1071" font-size="26" font-weight="bold" fill="#0f78d4" textLength="18" lengthAdjust="spacingAndGlyphs">e</text>
<path d="M401 1053h8l2 2h8v5h-18z" fill="#f0c868"/><rect x="401" y="1058" width="18" height="13" fill="#ffe39a"/><path d="M406 1071v-6h8v6" fill="none" stroke="#1f9be0" stroke-width="2.400"/>
<rect x="447" y="1052" width="16" height="19" fill="#e6efe0"/><path d="M449 1070v-12M452 1070v-8M455 1070v-10" stroke="#3a9a3a" stroke-width="2"/><path d="M459 1062l5-11" stroke="#d8a020" stroke-width="2.500"/>
<rect x="493" y="1051" width="18" height="21" rx="2" fill="#d8922c" stroke="#f0c080"/><circle cx="505" cy="1058" r="3" fill="none" stroke="#fff" stroke-width="1.400"/><path d="M503 1061l-5 7" stroke="#fff" stroke-width="1.400"/>
<path d="M540 1054l14-3 2 17-13 3z" fill="#8ab8d0" stroke="#cfe0e8"/>
<circle cx="594" cy="1062" r="9.500" fill="#22aa1e"/><path d="M590 1062l3 3 5-6" fill="none" stroke="#fff" stroke-width="1.600"/>
<rect x="633" y="1053" width="11" height="18" rx="2" fill="#e8e8e8"/><circle cx="639" cy="1061" r="3" fill="#222"/>
<rect x="677" y="1052" width="16" height="20" fill="#ddd" stroke="#555"/><text class="db" x="680" y="1068" font-size="13" fill="#e02020">D</text>
<rect x="723" y="1052" width="14" height="14" fill="none" stroke="#d83050" stroke-width="2"/><rect x="726" y="1055" width="8" height="8" fill="#555"/><path d="M721 1070h18M723 1072h14" stroke="#d83050" stroke-width="2"/>
<path d="M769 1055h12l4 3v13h-12l-4-3z" fill="#bbb" stroke="#888"/><circle cx="778" cy="1063" r="3.500" fill="#555"/>
<rect x="812" y="1052" width="20" height="20" fill="#f0f0e8"/><path d="M824 1053c-6 4-7 10-5 18 4-2 8-9 5-18z" fill="#d88a20"/>
<text class="u" x="836" y="1067" font-size="17" fill="#ededed" textLength="156" lengthAdjust="spacingAndGlyphs">Häuschen-Icon weißer...</text>
<circle cx="1023" cy="1062" r="10" fill="#5a3fd8"/><circle cx="1024" cy="1062" r="5" fill="#2d3236"/><path d="M1023 1052c4 2 8 6 8 10" stroke="#38c8e8" stroke-width="3" fill="none"/>
<text class="u" x="1037" y="1067" font-size="17" fill="#ededed" textLength="155" lengthAdjust="spacingAndGlyphs">Häuschen-Icon weißer...</text>
<!-- tray -->
<path d="M1671 1066l8-8 8 8" fill="none" stroke="#e8e8e8" stroke-width="1.400"/>
<rect x="1704" y="1057" width="14" height="9" fill="none" stroke="#eee" stroke-width="1.400"/><rect x="1705" y="1058" width="10" height="7" fill="#eee"/><rect x="1718" y="1059" width="2" height="5" fill="#eee"/><path d="M1700 1055v4h3v-4M1701 1059v3h3" stroke="#eee" fill="none"/>
<path d="M1733.500 1054.500h15.500v12h-15.500zM1741 1066.500v3.500M1736 1070.500h10M1729.500 1054.500h4v8h-4v-8M1733.500 1062.500v7" fill="none" stroke="#eee"/>
<path d="M1760 1058.500h3l5-4v15l-5-4h-3z" fill="none" stroke="#eee"/><path d="M1771 1060q1.500 2 0 4M1774 1057q3 5 0 10" fill="none" stroke="#aaa"/><path d="M1777 1054q5 8 0 16" fill="none" stroke="#666"/>
<text class="u" x="1792" y="1067" font-size="16" fill="#ededed" textLength="54" lengthAdjust="spacingAndGlyphs">18:24:07</text>
<path d="M1869.500 1052.500h19v15h-7l-2.500 2.500-2.500-2.500h-7z" fill="none" stroke="#eee"/>
<rect x="1914" y="1042" width="1" height="38" fill="#6a7075"/>
</svg>
</body></html>
